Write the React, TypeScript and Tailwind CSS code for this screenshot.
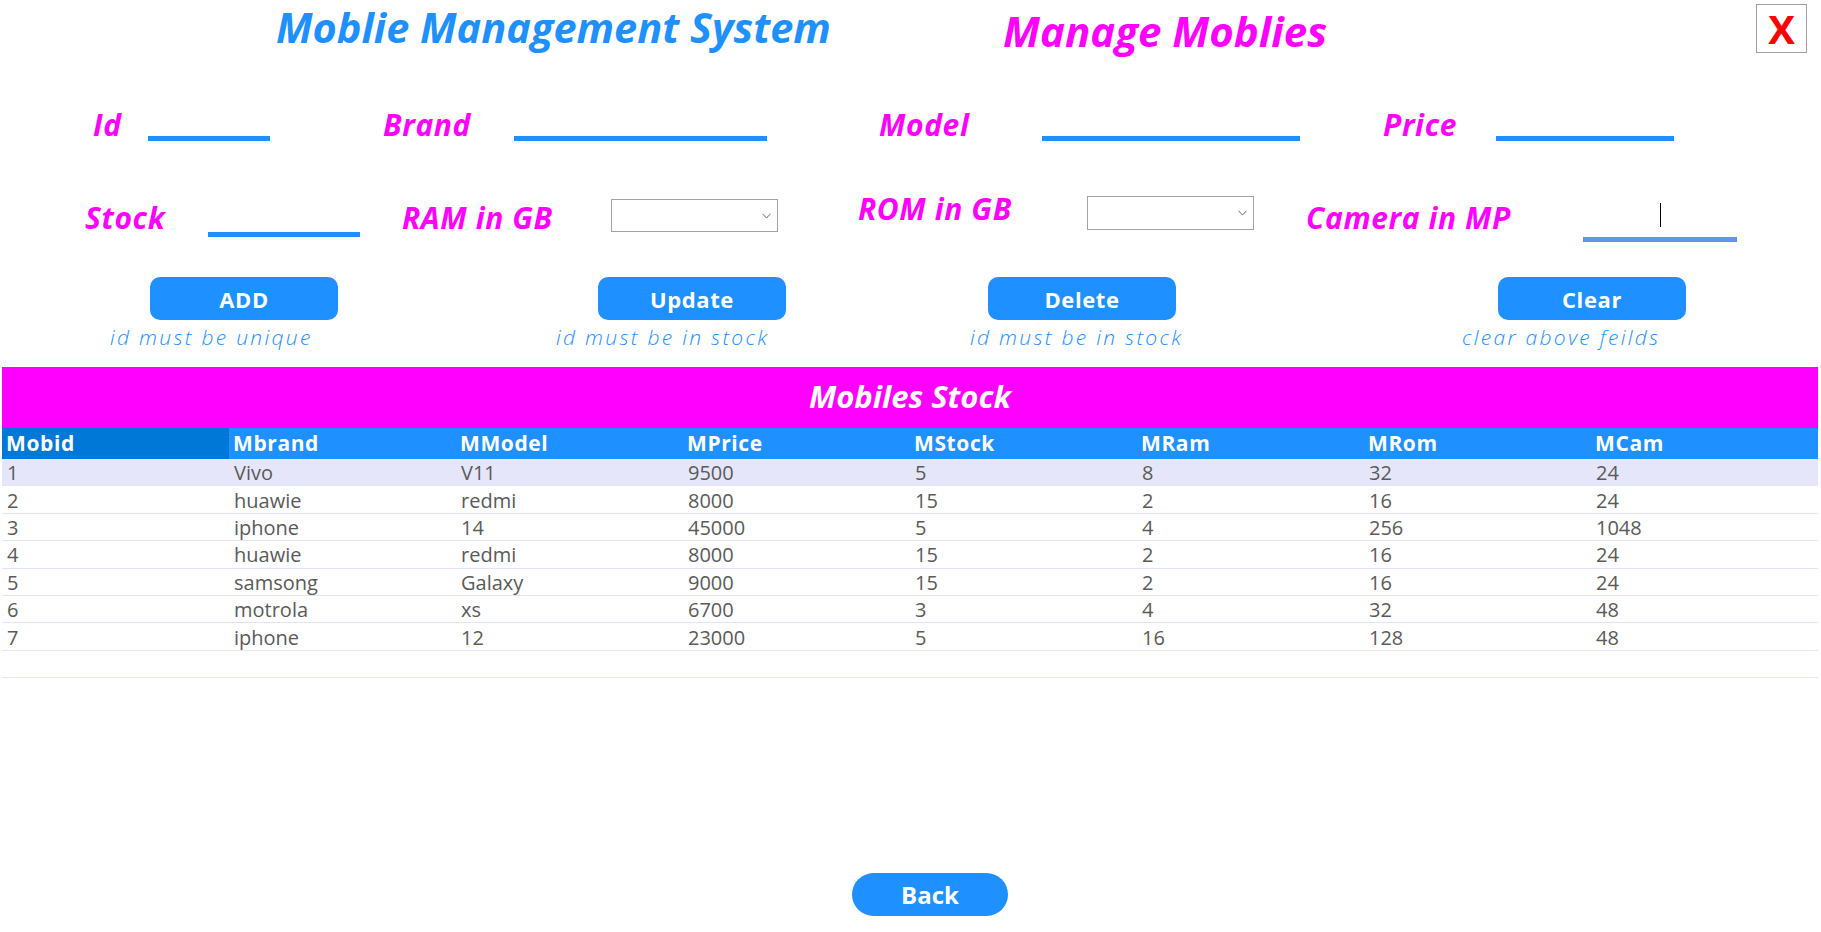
import React from "react";

interface Mobile {
  id: number;
  brand: string;
  model: string;
  price: number;
  stock: number;
  ram: number;
  rom: number;
  cam: number;
}

const mobiles: Mobile[] = [
  { id: 1, brand: "Vivo", model: "V11", price: 9500, stock: 5, ram: 8, rom: 32, cam: 24 },
  { id: 2, brand: "huawie", model: "redmi", price: 8000, stock: 15, ram: 2, rom: 16, cam: 24 },
  { id: 3, brand: "iphone", model: "14", price: 45000, stock: 5, ram: 4, rom: 256, cam: 1048 },
  { id: 4, brand: "huawie", model: "redmi", price: 8000, stock: 15, ram: 2, rom: 16, cam: 24 },
  { id: 5, brand: "samsong", model: "Galaxy", price: 9000, stock: 15, ram: 2, rom: 16, cam: 24 },
  { id: 6, brand: "motrola", model: "xs", price: 6700, stock: 3, ram: 4, rom: 32, cam: 48 },
  { id: 7, brand: "iphone", model: "12", price: 23000, stock: 5, ram: 16, rom: 128, cam: 48 },
];

const columns = ["Mobid", "Mbrand", "MModel", "MPrice", "MStock", "MRam", "MRom", "MCam"];

const ComboBox = ({ className = "" }: { className?: string }) => (
  <div
    className={`flex w-[167px] items-center justify-end border border-[#a3a3a3] bg-white pr-[6px] ${className}`}
  >
    <svg width="9" height="6" viewBox="0 0 9 6" fill="none">
      <path d="M0.5 0.8 L4.5 5 L8.5 0.8" stroke="#6b6b6b" strokeWidth="1" />
    </svg>
  </div>
);

const Label = ({ children, className = "" }: { children: React.ReactNode; className?: string }) => (
  <div
    className={`text-[30px] font-bold italic leading-none tracking-[0.6px] text-[#ff00ff] ${className}`}
  >
    {children}
  </div>
);

const Underline = ({ className = "" }: { className?: string }) => (
  <div className={`h-[5px] bg-[#1e90ff] ${className}`} />
);

const ActionButton = ({ children, className = "" }: { children: React.ReactNode; className?: string }) => (
  <button
    className={`flex h-[43px] w-[188px] items-center justify-center rounded-[10px] bg-[#1e90ff] text-[22px] font-bold leading-none tracking-[0.6px] text-white ${className}`}
  >
    {children}
  </button>
);

const Hint = ({ children, className = "" }: { children: React.ReactNode; className?: string }) => (
  <div className={`text-[21px] font-light italic leading-none tracking-[2.3px] text-[#1e90ff] ${className}`}>
    {children}
  </div>
);

export default function App() {
  return (
    <div className="h-[932px] w-[1821px] overflow-hidden bg-white font-['Open_Sans',sans-serif]">
      {/* Title bar */}
      <header className="flex h-[91px] items-start">
        <h1 className="ml-[276px] mt-[7px] w-[727px] text-[41.5px] font-bold italic leading-none text-[#1e90ff]">
          Moblie Management System
        </h1>
        <h2 className="mt-[10px] w-[753px] text-[42px] font-bold italic leading-none text-[#ff00ff]">
          Manage Moblies
        </h2>
        <button className="mt-[4px] flex h-[49px] w-[51px] items-center justify-center border border-[#a0a0a0] bg-white text-[40px] font-bold leading-none text-[#ff0000]">
          X
        </button>
      </header>

      {/* Row 1 */}
      <div className="flex h-[50px] items-end">
        <Label className="mb-[1px] ml-[93px] w-[55px]">Id</Label>
        <Underline className="w-[122px]" />
        <Label className="mb-[1px] ml-[113px] w-[131px]">Brand</Label>
        <Underline className="w-[253px]" />
        <Label className="mb-[1px] ml-[112px] w-[163px]">Model</Label>
        <Underline className="w-[258px]" />
        <Label className="mb-[1px] ml-[83px] w-[113px]">Price</Label>
        <Underline className="w-[178px]" />
      </div>

      {/* Row 2 */}
      <div className="flex h-[101px] items-end">
        <Label className="mb-[9px] ml-[85px] w-[123px]">Stock</Label>
        <Underline className="mb-[5px] w-[152px]" />
        <Label className="mb-[9px] ml-[42px] w-[209px]">RAM in GB</Label>
        <ComboBox className="mb-[10px] h-[33px]" />
        <Label className="mb-[18px] ml-[80px] w-[229px]">ROM in GB</Label>
        <ComboBox className="mb-[12px] h-[34px]" />
        <Label className="mb-[9px] ml-[52px] w-[277px]">Camera in MP</Label>
        <div className="flex w-[154px] flex-col">
          <div className="ml-[77px] h-[24px] w-[1px] bg-black" />
          <div className="mt-[10px] h-[5px] bg-[#6495ed]" />
        </div>
      </div>

      {/* Buttons */}
      <div className="mt-[35px] flex">
        <ActionButton className="ml-[150px]">ADD</ActionButton>
        <ActionButton className="ml-[260px]">Update</ActionButton>
        <ActionButton className="ml-[202px]">Delete</ActionButton>
        <ActionButton className="ml-[322px]">Clear</ActionButton>
      </div>
      <div className="mt-[7px] flex h-[20px]">
        <Hint className="ml-[110px] w-[446px]">id must be unique</Hint>
        <Hint className="w-[414px]">id must be in stock</Hint>
        <Hint className="w-[492px]">id must be in stock</Hint>
        <Hint>clear above feilds</Hint>
      </div>

      {/* Stock table */}
      <section className="ml-[2px] mt-[20px] w-[1816px]">
        <div className="flex h-[61px] items-center justify-center bg-[#ff00ff] pb-[2px]">
          <span className="text-[31px] font-bold italic leading-none text-white">Mobiles Stock</span>
        </div>
        <div className="grid h-[31px] grid-cols-8 bg-[#1e90ff]">
          {columns.map((c, i) => (
            <div
              key={c}
              className={`flex items-center pl-[4px] text-[21px] font-bold leading-none tracking-[0.6px] text-white ${
                i === 0 ? "bg-[#0078d7]" : ""
              }`}
            >
              {c}
            </div>
          ))}
        </div>
        {mobiles.map((m, r) => (
          <div
            key={m.id}
            className={`grid h-[27.4px] grid-cols-8 border-b border-[#e3e3f7] text-[20px] leading-none text-[#5a5a5a] ${
              r === 0 ? "bg-[#e6e6fa]" : "bg-white"
            }`}
          >
            {[m.id, m.brand, m.model, m.price, m.stock, m.ram, m.rom, m.cam].map((v, i) => (
              <div key={i} className="flex items-center pl-[5px] pt-[2px]">
                {v}
              </div>
            ))}
          </div>
        ))}
        <div className="h-[27.4px] border-b border-[#e3e3f7]" />
      </section>

      {/* Back */}
      <button className="ml-[852px] mt-[195px] flex h-[43px] w-[156px] items-center justify-center rounded-full bg-[#1e90ff] text-[24px] font-bold leading-none text-white">
        Back
      </button>
    </div>
  );
}
